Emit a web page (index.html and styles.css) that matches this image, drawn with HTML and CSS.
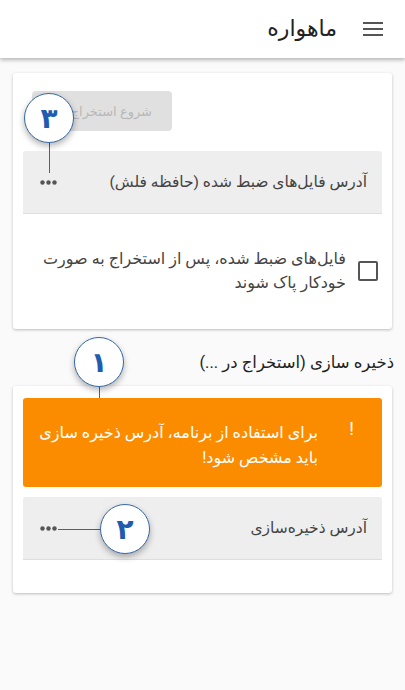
FILE: index.html
```html
<!DOCTYPE html>
<html lang="fa" dir="rtl">
<head>
    <meta charset="UTF-8">
    <meta name="viewport" content="width=device-width, initial-scale=1.0">
    <title>ماهواره</title>
    <link rel="stylesheet" href="styles.css">
</head>
<body>
    <header class="toolbar">
        <button class="menu-btn" aria-label="menu">
            <svg width="20" height="14" viewBox="0 0 20 14"><path d="M0 1h20M0 7h20M0 13h20" stroke="#555" stroke-width="2"/></svg>
        </button>
        <h1>ماهواره</h1>
    </header>

    <main class="content">
        <section class="card">
            <div class="actions">
                <button class="start-btn" disabled>شروع استخراج</button>
            </div>
            <div class="path-field">
                <span class="label">آدرس فایل‌های ضبط شده (حافظه فلش)</span>
                <svg class="dots" width="17" height="5" viewBox="0 0 17 5"><circle cx="2.5" cy="2.5" r="2.2"/><circle cx="8.5" cy="2.5" r="2.2"/><circle cx="14.5" cy="2.5" r="2.2"/></svg>
            </div>
            <label class="check-row">
                <span class="checkbox"></span>
                <span class="check-text">فایل‌های ضبط شده، پس از استخراج به صورت<br>خودکار پاک شوند</span>
            </label>

            <div class="callout callout-3">
                <span class="bubble">۳</span>
                <span class="line line-v"></span>
            </div>
        </section>

        <h2 class="section-title">ذخیره سازی (استخراج در ...)</h2>

        <section class="card card-storage">
            <div class="alert">
                <span class="alert-icon">!</span>
                <p>برای استفاده از برنامه، آدرس ذخیره سازی<br>باید مشخص شود!</p>
            </div>
            <div class="path-field">
                <span class="label">آدرس ذخیره‌سازی</span>
                <svg class="dots" width="17" height="5" viewBox="0 0 17 5"><circle cx="2.5" cy="2.5" r="2.2"/><circle cx="8.5" cy="2.5" r="2.2"/><circle cx="14.5" cy="2.5" r="2.2"/></svg>
            </div>

            <div class="callout callout-1">
                <span class="bubble">۱</span>
                <span class="line line-v"></span>
            </div>
            <div class="callout callout-2">
                <span class="bubble">۲</span>
                <span class="line line-h"></span>
            </div>
        </section>
    </main>
</body>
</html>
```

FILE: styles.css
```css
* {
    margin: 0;
    padding: 0;
    box-sizing: border-box;
}

body {
    font-family: Roboto, "DejaVu Sans", sans-serif;
    background: #fafafa;
    color: #333;
    min-height: 100vh;
}

.toolbar {
    height: 58px;
    background: #fff;
    display: flex;
    align-items: center;
    padding: 0 22px 0 0;
    box-shadow: 0 2px 4px rgba(0, 0, 0, 0.28);
    position: relative;
    z-index: 2;
}

.menu-btn {
    border: none;
    background: none;
    width: 20px;
    height: 14px;
    display: flex;
    margin-left: 26px;
}

.toolbar h1 {
    font-size: 22px;
    font-weight: normal;
    color: #222;
    margin-top: -2px;
}

.content {
    padding: 15px 13px 40px;
}

.card {
    position: relative;
    background: #fff;
    border-radius: 3px;
    box-shadow: 0 1px 3px rgba(0, 0, 0, 0.25);
    padding: 18px 10px 0;
}

.actions {
    display: flex;
    justify-content: flex-end;
    padding-left: 9px;
}

.start-btn {
    width: 140px;
    height: 40px;
    border: none;
    border-radius: 4px;
    background: #e0e0e0;
    color: #b8b8b8;
    font-family: inherit;
    font-size: 13px;
    font-weight: normal;
    letter-spacing: 1.5px;
    text-align: right;
    padding-right: 20px;
}

.path-field {
    margin-top: 20px;
    height: 63px;
    background: #eeeeee;
    border-bottom: 1px solid #dedede;
    border-radius: 3px 3px 0 0;
    display: flex;
    align-items: center;
    justify-content: space-between;
    padding: 0 15px 0 17px;
}

.path-field .label {
    font-size: 15.5px;
    color: #444;
}

.dots {
    fill: #555;
    flex-shrink: 0;
}

.check-row {
    display: flex;
    align-items: center;
    gap: 12px;
    padding: 33px 4px 34px 0;
}

.checkbox {
    width: 20px;
    height: 20px;
    border: 2px solid #555;
    border-radius: 2px;
    flex-shrink: 0;
}

.check-text {
    font-size: 16px;
    line-height: 24px;
    color: #444;
    white-space: nowrap;
}

.section-title {
    font-size: 16.5px;
    font-weight: normal;
    color: #222;
    margin: 21px -2px 10px 0;
    line-height: 26px;
}

.card-storage {
    padding: 12px 10px 33px;
}

.alert {
    position: relative;
    background: #fb8c00;
    border-radius: 3px;
    height: 89px;
    color: #fff;
    padding: 22px 64px 0 0;
}

.alert p {
    font-size: 16px;
    line-height: 25px;
    white-space: nowrap;
}

.alert-icon {
    position: absolute;
    top: 20px;
    right: 28px;
    font-size: 18px;
}

.card-storage .path-field {
    margin-top: 10px;
}

/* numbered callouts drawn over the cards */
.callout {
    position: absolute;
    z-index: 3;
}

.bubble {
    position: absolute;
    width: 50px;
    height: 50px;
    left: -25px;
    top: -25px;
    border-radius: 50%;
    background: #fff;
    border: 1.5px solid #3568a8;
    box-shadow: 0 3px 6px rgba(0, 0, 0, 0.3);
    color: #1f5cb0;
    font-size: 28px;
    font-weight: bold;
    display: flex;
    align-items: center;
    justify-content: center;
    z-index: 1;
}

.line {
    position: absolute;
    background: #3568a8;
}

.line-v {
    width: 1px;
    left: 0;
    top: 25px;
}

.line-h {
    height: 1px;
    top: 0;
    right: 25px;
}

.callout-3 {
    left: 36px;
    top: 45px;
}

.callout-3 .line-v {
    height: 30px;
}

.callout-1 {
    left: 86px;
    top: -24px;
}

.callout-1 .line-v {
    height: 11px;
}

.callout-2 {
    left: 112px;
    top: 143px;
}

.callout-2 .line-h {
    width: 42px;
}
```
